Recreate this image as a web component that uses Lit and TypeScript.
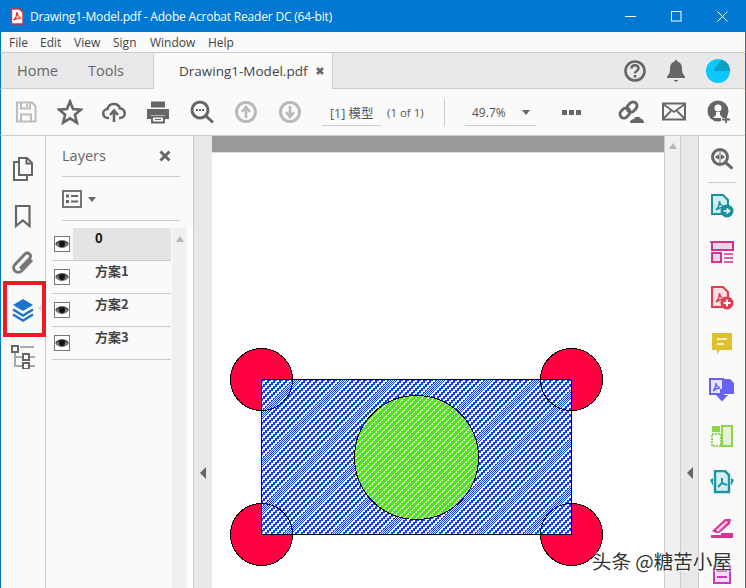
import { LitElement, html, svg, css } from "lit";
import { customElement } from "lit/decorators.js";

const G = "#666";
function hatchPath(dense: boolean): string {
  let d = "";
  const n = 48;
  for (let y = 0; y < n; y++) {
    for (let x = 0; x < n; x++) {
      const s = x + y;
      const v = s % 6;
      const band = s % 48 < 10;
      let on: boolean;
      if (dense) on = !(v === 3 || (v === 4 && x % 2 === 0));
      else if (band) on = s % 2 === 0;
      else on = v < 2 || (v === 2 && x % 2 === 0) || (v === 5 && x % 2 === 1);
      if (on) d += `M${x} ${y}h1v1h-1z`;
    }
  }
  return d;
}
const HATCH_BLUE = hatchPath(false);
const HATCH_GREEN = hatchPath(true);

const I = {
  pdf: html`<svg width="14" height="17" viewBox="0 0 14 17"><path d="M1.5 1h8l3.5 3.500V16h-11.500z" fill="#fff" stroke="#d33" stroke-width="1.500"/><path d="M3.500 12c2-1 3-4 3-6.500 0-1 1-1 1 0 0 2 2 4.500 3.500 4.500-2 0-5 1-7.500 2z" fill="none" stroke="#e22" stroke-width="1.200"/></svg>`,
  save: html`<svg width="24" height="24" viewBox="0 0 24 24"><g fill="none" stroke="#bdbdbd" stroke-width="2"><path d="M3 2.500h15l3.500 3.500v15.500H3z"/><path d="M7 2.500v6h9v-6M7 21.500v-7h10v7"/></g><rect x="12" y="4" width="2" height="3" fill="#bdbdbd"/></svg>`,
  star: html`<svg width="26" height="26" viewBox="0 0 26 26"><path d="M13 2.500l3 7.500 8 .6-6.100 5.200 2 7.900-6.900-4.300-6.900 4.300 2-7.900L2 10.600l8-.6z" fill="none" stroke="${G}" stroke-width="2.600"/></svg>`,
  cloud: html`<svg width="24" height="24" viewBox="0 0 24 24"><g fill="none" stroke="${G}" stroke-width="2.600"><path d="M7 18H6a4.500 4.500 0 0 1-.5-9 6.500 6.500 0 0 1 12.500-.5A4.700 4.700 0 0 1 18 18h-1"/><path d="M12 22V11M8 15l4-4.500 4 4.500"/></g></svg>`,
  print: html`<svg width="24" height="24" viewBox="0 0 24 24"><path d="M5 1.500h14v6H5z" fill="${G}"/><path d="M1 9h22v10h-4v-4H5v4H1z" fill="${G}"/><path d="M6 16.500h12v6H6z" fill="none" stroke="${G}" stroke-width="2"/><path d="M9 19.500h6" stroke="${G}"/></svg>`,
  zoom: html`<svg width="24" height="24" viewBox="0 0 24 24"><circle cx="10" cy="10" r="8" fill="none" stroke="${G}" stroke-width="3"/><path d="M16 16l7 6.500" stroke="${G}" stroke-width="3"/><path d="M6 10h8" stroke="${G}" stroke-width="2" stroke-dasharray="2 1"/></svg>`,
  up: html`<svg width="24" height="24" viewBox="0 0 24 24"><circle cx="12" cy="12" r="9.500" fill="none" stroke="#b8b8b8" stroke-width="3"/><path d="M12 18v-9M8 12l4-5 4 5" fill="none" stroke="#b8b8b8" stroke-width="2.500"/></svg>`,
  down: html`<svg width="24" height="24" viewBox="0 0 24 24"><circle cx="12" cy="12" r="9.500" fill="none" stroke="#b8b8b8" stroke-width="3"/><path d="M12 6v9M8 12l4 5 4-5" fill="none" stroke="#b8b8b8" stroke-width="2.500"/></svg>`,
  link: html`<svg width="26" height="24" viewBox="0 0 26 24"><g fill="none" stroke="${G}" stroke-width="2.800"><rect x="1.500" y="9" width="11" height="8" rx="4" transform="rotate(-45 7 13)"/><rect x="8.500" y="3" width="11" height="8" rx="4" transform="rotate(-45 14 7)"/></g><path d="M12 23c0-3 2-4 4-4 1-3 6-3 7 0 2 0 3 2 3 4z" fill="${G}"/></svg>`,
  mail: html`<svg width="24" height="20" viewBox="0 0 24 20"><rect x="1" y="1.500" width="22" height="16" fill="none" stroke="${G}" stroke-width="2"/><path d="M1 2l11 8 11-8M1 17l8-8M23 17l-8-8" fill="none" stroke="${G}" stroke-width="1.800"/></svg>`,
  person: html`<svg width="24" height="24" viewBox="0 0 24 24"><circle cx="11" cy="11" r="10.500" fill="${G}"/><circle cx="11" cy="8" r="3.500" fill="#fafafa"/><path d="M9 12h4v3l3 3H6l3-3z" fill="#fafafa"/><path d="M14 18h10v6H14z" fill="#fafafa"/><path d="M19 15v8M15 19.500h8" stroke="${G}" stroke-width="1.800"/></svg>`,
  help: html`<svg width="24" height="24" viewBox="0 0 24 24"><circle cx="12" cy="12" r="9.500" fill="none" stroke="${G}" stroke-width="2.600"/><path d="M8.500 9.500c0-4.500 7-4.500 7 0 0 2.500-3.500 2.500-3.500 5" fill="none" stroke="${G}" stroke-width="2.500"/><rect x="10.700" y="16" width="2.600" height="2.600" fill="${G}"/></svg>`,
  bell: html`<svg width="20" height="24" viewBox="0 0 20 24"><path d="M10 1c1 0 1.500.7 1.500 1.500 3 1 4.500 3.500 4.500 7 0 4 1 6 3 8v1.500H1V17.500c2-2 3-4 3-8 0-3.500 1.500-6 4.500-7C8.500 1.700 9 1 10 1z" fill="${G}"/><path d="M7.500 21h5l-2.500 2z" fill="${G}"/></svg>`,
  avatar: html`<svg width="24" height="24" viewBox="0 0 24 24"><circle cx="12" cy="12" r="12" fill="#0ac8fb"/><path d="M15.500.5A12 12 0 0 1 24 12H7z" fill="#0a9fc4"/></svg>`,
  pages: html`<svg width="22" height="26" viewBox="0 0 22 26"><g fill="none" stroke="${G}" stroke-width="2"><path d="M7 6H2v18h13v-5"/><path d="M7 2h8l5 5v12H7z"/><path d="M14.500 2v5.500H20"/></g></svg>`,
  bookmark: html`<svg width="18" height="24" viewBox="0 0 18 24"><path d="M2 2h13.500v20l-6.700-5.500L2 22z" fill="none" stroke="${G}" stroke-width="2.200"/></svg>`,
  clip: html`<svg width="24" height="26" viewBox="0 0 24 26"><path d="M21 10L10.500 21a4.500 4.500 0 0 1-6.500-6.500L14 4a3.200 3.200 0 0 1 4.600 4.500L9 18.500" fill="none" stroke="#777" stroke-width="3"/></svg>`,
  layers: html`<svg width="22" height="24" viewBox="0 0 22 24"><path d="M11 1l10 6-10 6L1 7z" fill="#1b75cf"/><path d="M1 11.500l10 6 10-6M1 16.500l10 6 10-6" fill="none" stroke="#1b75cf" stroke-width="2.500"/></svg>`,
  tree: html`<svg width="24" height="24" viewBox="0 0 24 24"><path d="M4 7v14h7M4 12h7M9 2h14" fill="none" stroke="#aaa" stroke-width="2"/><g fill="#fafafa" stroke="${G}" stroke-width="2"><rect x="1" y="1" width="6" height="6"/><rect x="12" y="9" width="6" height="6"/><rect x="12" y="18" width="6" height="6"/></g><path d="M19 12h5M19 21h5" stroke="#aaa" stroke-width="2"/></svg>`,
  listMenu: html`<svg width="20" height="18" viewBox="0 0 20 18"><rect x="1" y="1" width="18" height="16" fill="none" stroke="${G}" stroke-width="1.800"/><path d="M4 6h3M4 11.500h3" stroke="${G}" stroke-width="3"/><path d="M9 6h7M9 11.500h7" stroke="${G}" stroke-width="1.800"/></svg>`,
  eye: html`<svg width="14" height="10" viewBox="0 0 14 10"><path d="M0 5c3-5.500 11-5.500 14 0-3 5.500-11 5.500-14 0z" fill="#777"/><circle cx="7" cy="5" r="3" fill="#111"/><path d="M1 4.500c3-3 9-3 12 0" stroke="#222" fill="none"/></svg>`,
  close: html`<svg width="12" height="12" viewBox="0 0 12 12"><path d="M1.500 1.500l9 9M10.500 1.500l-9 9" stroke="${G}" stroke-width="3"/></svg>`,
  tabClose: html`<svg width="8" height="8" viewBox="0 0 8 8"><path d="M1 1l6 6M7 1L1 7" stroke="${G}" stroke-width="2.500"/></svg>`,
  rZoom: html`<svg width="22" height="22" viewBox="0 0 22 22"><circle cx="9" cy="9" r="7.500" fill="none" stroke="${G}" stroke-width="3"/><path d="M9 3v12M4.500 9l3-2v4zM13.500 9l-3-2v4z" fill="${G}" stroke="${G}"/><path d="M14.500 14.500l7 6" stroke="${G}" stroke-width="3"/></svg>`,
  rExport: html`<svg width="24" height="24" viewBox="0 0 24 24"><path d="M2 1h11l5 5v14H2z" fill="#d1edf0" stroke="#17919d" stroke-width="2"/><path d="M6 16c2-2 3.500-5 3.500-9 0 3 2 5 5 6-3 0-6 1-8.500 3z" fill="none" stroke="#17919d" stroke-width="1.500"/><circle cx="17" cy="17" r="6.500" fill="#17919d"/><path d="M13.500 17h5M16.500 14.500l3 2.500-3 2.500" fill="none" stroke="#fff" stroke-width="1.600"/></svg>`,
  rForm: html`<svg width="24" height="24" viewBox="0 0 24 24"><g fill="#f4d3e8" stroke="#d8308f" stroke-width="2"><rect x="2" y="2" width="21" height="8"/><rect x="2" y="13" width="9" height="9"/></g><path d="M0 2h4M14 14h9M14 18h9M14 22h9" stroke="#d8308f" stroke-width="1.500"/></svg>`,
  rCreate: html`<svg width="24" height="24" viewBox="0 0 24 24"><path d="M2 1h11l5 5v15H2z" fill="#fbe0e3" stroke="#e63a52" stroke-width="2"/><path d="M6 16c2-2 3.500-5 3.500-9 0 3 2 5 5 6-3 0-6 1-8.500 3z" fill="none" stroke="#e63a52" stroke-width="1.500"/><circle cx="17" cy="17" r="6.500" fill="#e63a52"/><path d="M13.500 17h7M17 13.500v7" stroke="#fff" stroke-width="2"/></svg>`,
  rComment: html`<svg width="22" height="24" viewBox="0 0 22 24"><path d="M1 1h20v17H9l-3 4.500V18H1z" fill="#e0c02c"/><path d="M6 7h10M6 12h7" stroke="#fff" stroke-width="1.500"/></svg>`,
  rCombine: html`<svg width="26" height="24" viewBox="0 0 26 24"><path d="M1 1h13v15H1z" fill="#e7e5fd" stroke="#6a62f0" stroke-width="2"/><path d="M15 1h6l4 4v11H15z" fill="#6a62f0"/><path d="M4 13c2-2 3-4 3-8 0 3 2 4 4 5-3 0-5 1-7 3z" fill="none" stroke="#6a62f0" stroke-width="1.400"/><path d="M11 11h4v6h4l-6 6.500L7 17h4z" fill="#6a62f0"/></svg>`,
  rOrganize: html`<svg width="22" height="22" viewBox="0 0 22 22"><rect x="11" y="1" width="10" height="20" fill="#e4f4d6" stroke="#8bd54a" stroke-width="2"/><rect x="1" y="9" width="9" height="12" fill="none" stroke="#8bd54a" stroke-width="2" stroke-dasharray="2 1"/><path d="M1 1h8v6H1z" fill="#8bd54a"/></svg>`,
  rAcrobat: html`<svg width="26" height="24" viewBox="0 0 26 24"><path d="M6 1h10l4 4v17H6z" fill="#d6eef0" stroke="#1f97a3" stroke-width="2.500"/><path d="M1 10l3-2v8zM25 10l-3-2v8z" fill="#1f97a3"/><path d="M9 17l4-4 5 2M13 13V8" fill="none" stroke="#1f97a3" stroke-width="2"/></svg>`,
  rSign: html`<svg width="24" height="22" viewBox="0 0 24 22"><path d="M2 14L15 2l6 0-1 5L8 17z" fill="#d9348f"/><path d="M6 13l10-9 2 1L8 15z" fill="#f6cfe4"/><path d="M1 16h22v5H1z" fill="#d9348f"/><path d="M1 16h10v2H1z" fill="#fafafa"/></svg>`,
  rStamp: html`<svg width="18" height="20" viewBox="0 0 18 20"><path d="M1 2h16v17H1z" fill="#f5dcf3" stroke="#c93ac4" stroke-width="2"/><path d="M4 7h10M4 13h10" stroke="#c93ac4" stroke-width="2"/></svg>`,
};

@customElement("app-root")
export class AppRoot extends LitElement {
  static styles = css`
    :host { display: block; width: 746px; height: 588px; overflow: hidden; position: relative; background: #fafafa; font-family: "Open Sans", "Noto Sans", "Noto Sans CJK SC", sans-serif; color: #555; }
    svg { display: block; flex: none; }
    .title { height: 32px; background: #0078d4; display: flex; align-items: center; color: #fff; font-size: 12px; }
    .title .pdf { margin-left: 10px; width: 20px; }
    .title .name { flex: 1; white-space: nowrap; letter-spacing: -0.19px; }
    .win { width: 46px; height: 32px; display: flex; align-items: center; justify-content: center; }
    .win-last { margin-right: 1px; }
    .menu { height: 20px; display: flex; align-items: center; font-size: 12px; color: #444; padding-left: 8px; border-left: 1px solid #0078d4; border-right: 1px solid #0078d4; margin: 0; box-sizing: border-box; }
    .menu span { white-space: nowrap; }
    .m-file { width: 31px; } .m-edit { width: 34px; } .m-view { width: 39px; } .m-sign { width: 37px; } .m-window { width: 58px; }
    .tabs { height: 37px; box-sizing: border-box; border-top: 1px solid #ccc; border-bottom: 1px solid #ccc; background: #e9e9e9; display: flex; align-items: center; border-left: 1px solid #0078d4; border-right: 1px solid #0078d4; }
    .t-home { margin-left: 16px; font-size: 14.500px; color: #666; width: 71px; }
    .t-tools { font-size: 14.500px; color: #666; width: 65px; }
    .tab { align-self: stretch; margin-bottom: -1px; width: 180px; box-sizing: border-box; background: #fafafa; border-left: 1px solid #ccc; border-right: 1px solid #ccc; display: flex; align-items: center; padding-left: 25px; font-size: 13.500px; color: #444; gap: 9px; white-space: nowrap; }
    .t-right { margin-left: auto; display: flex; align-items: center; margin-right: 15px; }
    .t-right .help { margin-right: 19px; }
    .t-right .bell { margin-right: 20px; }
    .bar { height: 47px; box-sizing: border-box; border-bottom: 1px solid #ccc; display: flex; align-items: center; border-left: 1px solid #0078d4; border-right: 1px solid #0078d4; font-size: 12px; color: #555; padding-left: 13px; }
    .tool { width: 24px; margin-right: 20px; display: flex; justify-content: center; }
    .field { height: 26px; box-sizing: border-box; border-bottom: 1px solid #ccc; display: flex; align-items: center; white-space: nowrap; margin-top: 1px; }
    .f-page { width: 59px; padding-left: 8px; font-size: 12.500px; }
    .of { margin-left: 6px; width: 57px; white-space: nowrap; font-size: 11.500px; }
    .sep { width: 1px; height: 27px; background: #ccc; }
    .f-zoom { width: 71px; margin-left: 20px; padding-left: 7px; gap: 16px; }
    .caret { width: 0; height: 0; border-left: 4px solid transparent; border-right: 4px solid transparent; border-top: 5px solid #666; }
    .dots { display: flex; gap: 2px; margin-left: 26px; width: 56px; }
    .dots i { width: 5px; height: 5px; background: #666; }
    .end { display: flex; align-items: center; }
    .end .e1 { margin-right: 18px; }
    .end .e2 { margin-right: 21px; }
    .main { height: 452px; display: flex; }
    .edge { width: 1px; background: #0078d4; flex: none; }
    .rail { width: 44px; flex: none; display: flex; flex-direction: column; align-items: center; position: relative; }
    .rail .it { height: 47px; display: flex; align-items: center; justify-content: center; flex: none; }
    .rail .first { margin-top: 9px; }
    .mark { position: absolute; left: 2px; top: 145px; width: 43px; height: 56px; box-sizing: border-box; border: 4px solid #ed1c24; }
    .tip { position: absolute; left: 37px; top: 168px; width: 0; height: 0; border-top: 4px solid transparent; border-bottom: 4px solid transparent; border-right: 4px solid #ddd; }
    .panel { width: 149px; flex: none; box-sizing: border-box; border-left: 1px solid #ccc; border-right: 1px solid #ccc; display: flex; flex-direction: column; }
    .p-head { margin-left: 16px; width: 118px; height: 41px; box-sizing: border-box; border-bottom: 1px solid #ccc; display: flex; align-items: center; justify-content: space-between; padding: 0 9px 1px 0; font-size: 14.500px; color: #666; }
    .p-tool { margin-left: 16px; width: 118px; height: 44px; box-sizing: border-box; border-bottom: 1px solid #ccc; display: flex; align-items: center; gap: 6px; padding-top: 1px; }
    .p-body { flex: 1; display: flex; margin-top: 7px; }
    .rows { width: 119px; margin: 0 1px 0 6px; flex: none; }
    .row { height: 33px; box-sizing: border-box; border-bottom: 1px solid #ccc; display: flex; }
    .eye { width: 16px; height: 16px; box-sizing: border-box; border: 1px solid #777; margin: 8px 0 0 2px; display: flex; align-items: center; justify-content: center; background: #fff; }
    .lab { flex: 1; margin-left: 3px; padding: 2px 0 0 22px; font: bold 13px/16px "Noto Sans CJK SC", "Liberation Serif", sans-serif; color: #444; }
    .row.sel .lab { background: #e4e4e4; color: #111; }
    .p-scroll { width: 15px; background: #f0f0f0; flex: none; display: flex; justify-content: center; padding-top: 8px; box-sizing: border-box; }
    .p-right { width: 6px; background: #fdfdfd; }
    .tri-up { width: 0; height: 0; border-left: 4.500px solid transparent; border-right: 4.500px solid transparent; border-bottom: 6px solid #b5b5b5; }
    .gutter { width: 18px; flex: none; background: #e8e8e8; display: flex; align-items: center; justify-content: center; }
    .g2 { width: 17px; }
    .gutter .tri { width: 0; height: 0; border-top: 6px solid transparent; border-bottom: 6px solid transparent; border-right: 6px solid #666; margin-top: 222px; }
    .page { width: 452px; flex: none; background: #fff; display: flex; flex-direction: column; }
    .band { height: 16px; background: #999; border-bottom: 1px solid #ddd; flex: none; }
    .s2 { flex: none; box-sizing: border-box; background: #f0f0f0; border-left: 1px solid #ccc; border-right: 1px solid #ccc; width: 17px; display: flex; justify-content: center; padding-top: 7px; }
    .right { width: 46px; flex: none; border-left: 1px solid #ccc; display: flex; flex-direction: column; align-items: center; box-sizing: content-box; }
    .right .ri { height: 46px; flex: none; display: flex; align-items: center; justify-content: center; }
    .right .top { height: 47px; box-sizing: border-box; width: 28px; border-bottom: 1px solid #ccc; flex: none; display: flex; align-items: center; justify-content: center; }
    .mark-text { position: absolute; left: 592px; top: 548px; font: 19.500px/26px "Noto Sans CJK SC", sans-serif; color: #333; white-space: nowrap; text-shadow: 0 0 2px #fff, 0 0 2px #fff, 0 0 3px #fff; }
  `;

  render() {
    const hatch = (id: string, c: string, d: string) => svg`<pattern id=${id} width="48" height="48" patternUnits="userSpaceOnUse"><rect width="48" height="48" fill="#fff"/><path d=${d} fill=${c}/></pattern>`;
    const rows = [["0", true], ["方案1", false], ["方案2", false], ["方案3", false]] as [string, boolean][];
    const circles = [[261.5, 379.5], [571.5, 379.5], [261.5, 534.5], [571.5, 534.5]];
    return html`
      <div class="title">
        <div class="pdf">${I.pdf}</div>
        <div class="name">Drawing1-Model.pdf - Adobe Acrobat Reader DC (64-bit)</div>
        <div class="win"><svg width="11" height="11" viewBox="0 0 11 11"><path d="M0 5.500h11" stroke="#fff"/></svg></div>
        <div class="win"><svg width="11" height="11" viewBox="0 0 11 11"><rect x=".5" y=".5" width="9.500" height="9.500" fill="none" stroke="#fff"/></svg></div>
        <div class="win win-last"><svg width="11" height="11" viewBox="0 0 11 11"><path d="M.5.500l10 10M10.500.500l-10 10" stroke="#fff"/></svg></div>
      </div>
      <div class="menu">
        <span class="m-file">File</span><span class="m-edit">Edit</span><span class="m-view">View</span><span class="m-sign">Sign</span><span class="m-window">Window</span><span>Help</span>
      </div>
      <div class="tabs">
        <span class="t-home">Home</span><span class="t-tools">Tools</span>
        <div class="tab"><span>Drawing1-Model.pdf</span>${I.tabClose}</div>
        <div class="t-right"><div class="help">${I.help}</div><div class="bell">${I.bell}</div><div>${I.avatar}</div></div>
      </div>
      <div class="bar">
        <div class="tool">${I.save}</div><div class="tool">${I.star}</div><div class="tool">${I.cloud}</div><div class="tool">${I.print}</div><div class="tool">${I.zoom}</div><div class="tool">${I.up}</div><div class="tool">${I.down}</div>
        <div class="field f-page">[1] 模型</div>
        <div class="of">(1 of 1)</div>
        <div class="sep"></div>
        <div class="field f-zoom"><span>49.7%</span><span class="caret"></span></div>
        <div class="dots"><i></i><i></i><i></i></div>
        <div class="end"><div class="e1">${I.link}</div><div class="e2">${I.mail}</div><div>${I.person}</div></div>
      </div>
      <div class="main">
        <div class="edge"></div>
        <div class="rail">
          <div class="it first">${I.pages}</div>
          <div class="it">${I.bookmark}</div>
          <div class="it">${I.clip}</div>
          <div class="it">${I.layers}</div>
          <div class="it">${I.tree}</div>
          <div class="mark"></div><div class="tip"></div>
        </div>
        <div class="panel">
          <div class="p-head"><span>Layers</span>${I.close}</div>
          <div class="p-tool">${I.listMenu}<span class="caret"></span></div>
          <div class="p-body">
            <div class="rows">
              ${rows.map(([t, s]) => html`<div class="row ${s ? "sel" : ""}"><div class="eye">${I.eye}</div><div class="lab">${t}</div></div>`)}
            </div>
            <div class="p-scroll"><div class="tri-up"></div></div>
            <div class="p-right"></div>
          </div>
        </div>
        <div class="gutter"><div class="tri"></div></div>
        <div class="page">
          <div class="band"></div>
          <svg width="452" height="435" viewBox="212 153 452 435" shape-rendering="crispEdges">
            <defs>${hatch("hb", "#0a40f5", HATCH_BLUE)}${hatch("hg", "#40f000", HATCH_GREEN)}
              <clipPath id="inrect"><rect x="261" y="379" width="311" height="156"/></clipPath>
            </defs>
            ${circles.map(([x, y]) => svg`<circle cx=${x} cy=${y} r="31" fill="#ff0040" stroke="#000"/>`)}
            <rect x="261.500" y="379.500" width="310" height="155" fill="url(#hb)" stroke="#000"/>
            ${circles.map(([x, y]) => svg`<circle cx=${x} cy=${y} r="31" fill="none" stroke="#000" clip-path="url(#inrect)"/>`)}
            <circle cx="416.500" cy="457.500" r="62" fill="url(#hg)" stroke="#000"/>
          </svg>
        </div>
        <div class="s2"><div class="tri-up"></div></div>
        <div class="gutter g2"><div class="tri"></div></div>
        <div class="right">
          <div class="top">${I.rZoom}</div>
          <div class="ri">${I.rExport}</div>
          <div class="ri">${I.rForm}</div>
          <div class="ri">${I.rCreate}</div>
          <div class="ri">${I.rComment}</div>
          <div class="ri">${I.rCombine}</div>
          <div class="ri">${I.rOrganize}</div>
          <div class="ri">${I.rAcrobat}</div>
          <div class="ri">${I.rSign}</div>
          <div class="ri">${I.rStamp}</div>
        </div>
        <div class="edge"></div>
      </div>
      <div class="mark-text">头条 @糖苦小屋</div>
    `;
  }
}
